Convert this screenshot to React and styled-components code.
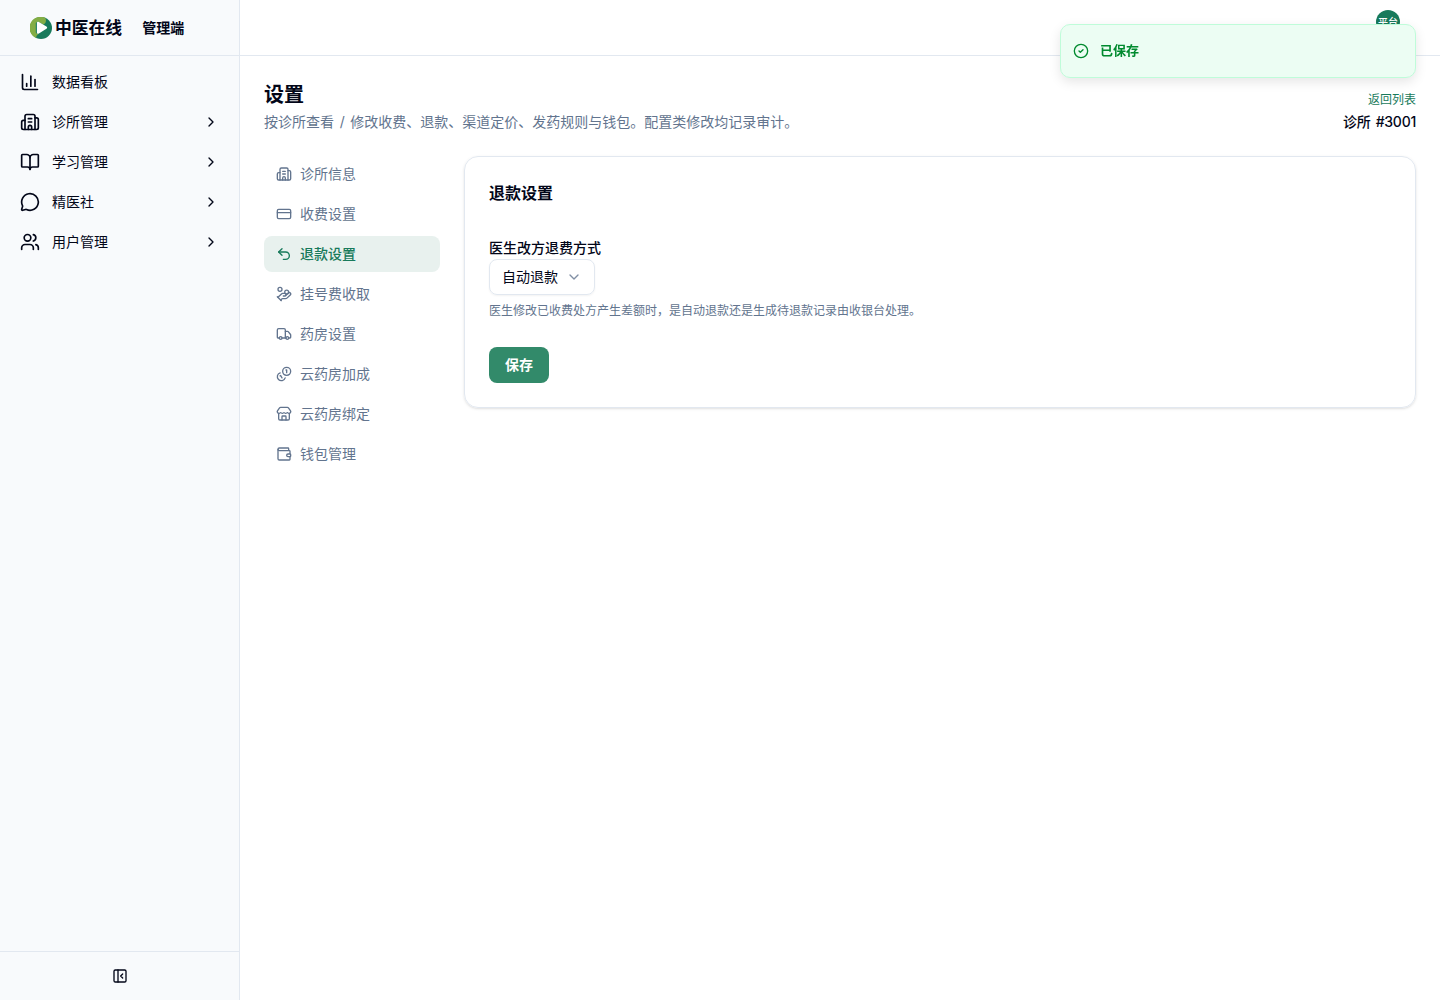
import React, { useState } from 'react'
import styled, { createGlobalStyle } from 'styled-components'
import {
    BookOpen,
    Building2,
    ChartColumn,
    ChevronDown,
    ChevronRight,
    CircleCheck,
    CreditCard,
    HandCoins,
    MessageCircle,
    PanelLeftClose,
    Store,
    Truck,
    Undo2,
    Users,
    Wallet
} from 'lucide-react'

const Coins = ({ size }) => (
    <svg
        width={size}
        height={size}
        viewBox="0 0 24 24"
        fill="none"
        stroke="currentColor"
        strokeWidth="2"
        strokeLinecap="round"
        strokeLinejoin="round"
    >
        <path d="M13.744 17.736a6 6 0 1 1-7.48-7.48" />
        <path d="M15 6h1v4" />
        <path d="m6.134 14.768.866-.5 2 3.464" />
        <circle cx="16" cy="8" r="6" />
    </svg>
)

const menu = [
    { label: '数据看板', icon: ChartColumn },
    { label: '诊所管理', icon: Building2, children: true },
    { label: '学习管理', icon: BookOpen, children: true },
    { label: '精医社', icon: MessageCircle, children: true },
    { label: '用户管理', icon: Users, children: true }
]

const tabs = [
    { label: '诊所信息', icon: Building2 },
    { label: '收费设置', icon: CreditCard },
    { label: '退款设置', icon: Undo2 },
    { label: '挂号费收取', icon: HandCoins },
    { label: '药房设置', icon: Truck },
    { label: '云药房加成', icon: Coins },
    { label: '云药房绑定', icon: Store },
    { label: '钱包管理', icon: Wallet }
]

const Logo = () => (
    <svg width="22" height="22" viewBox="0 0 22 22">
        <circle cx="11" cy="11" r="11" fill="#187a5b" />
        <path d="M6.4 21A11 11 0 1 1 15.2 .85C16.8 3.4 15.8 6.6 13.5 7.4L8 4.6L5.8 6V15.5C6.4 16.8 8.2 16.9 8.4 17.2C6.8 17.8 6 19.2 6.4 21Z" fill="#83ad45" />
        <path d="M6.9 6.2c0-1.2 1-1.7 2-1.2l7.5 4.6c1 .6 1 1.7 0 2.2l-7.5 4.7c-1 .6-2 .1-2-1.1z" fill="#fff" />
    </svg>
)

const App = () => {
    const [activeTab, setActiveTab] = useState('退款设置')

    return (
        <>
            <GlobalStyle />
            <Layout>
                <Sidebar>
                    <Brand>
                        <Logo />
                        <BrandName>中医在线</BrandName>
                        <BrandRole>管理端</BrandRole>
                    </Brand>
                    <Menu>
                        {menu.map(({ label, icon: Icon, children }) => (
                            <MenuItem key={label}>
                                <Icon size={20} />
                                <span>{label}</span>
                                {children && <ChevronRight size={16} />}
                            </MenuItem>
                        ))}
                    </Menu>
                    <SidebarFooter>
                        <PanelLeftClose size={16} />
                    </SidebarFooter>
                </Sidebar>

                <Main>
                    <TopBar>
                        <Avatar>平台</Avatar>
                    </TopBar>
                    <Content>
                        <PageHeader>
                            <div>
                                <PageTitle>设置</PageTitle>
                                <PageDescription>按诊所查看 / 修改收费、退款、渠道定价、发药规则与钱包。配置类修改均记录审计。</PageDescription>
                            </div>
                            <ClinicInfo>
                                <BackLink href="#">返回列表</BackLink>
                                <ClinicName>诊所 #3001</ClinicName>
                            </ClinicInfo>
                        </PageHeader>
                        <Columns>
                            <TabList>
                                {tabs.map(({ label, icon: Icon }) => (
                                    <Tab key={label} $active={label === activeTab} onClick={() => setActiveTab(label)}>
                                        <Icon size={16} />
                                        {label}
                                    </Tab>
                                ))}
                            </TabList>
                            <Card>
                                <CardTitle>退款设置</CardTitle>
                                <Field>
                                    <Label>医生改方退费方式</Label>
                                    <Select>
                                        自动退款
                                        <ChevronDown size={16} />
                                    </Select>
                                    <Hint>医生修改已收费处方产生差额时，是自动退款还是生成待退款记录由收银台处理。</Hint>
                                </Field>
                                <SaveButton>保存</SaveButton>
                            </Card>
                        </Columns>
                    </Content>
                </Main>
            </Layout>
            <Toast>
                <CircleCheck size={16} />
                <ToastText>已保存</ToastText>
            </Toast>
        </>
    )
}

const GlobalStyle = createGlobalStyle`
    * {
        box-sizing: border-box;
    }
    body {
        margin: 0;
        background: #fff;
        color: #020618;
        font-family: Inter, 'Noto Sans CJK SC', sans-serif;
        font-size: 14px;
        line-height: 20px;
    }
    button {
        font: inherit;
        color: inherit;
        background: none;
        border: none;
        padding: 0;
        cursor: pointer;
    }
    h1, h2, p {
        margin: 0;
    }
    svg {
        flex-shrink: 0;
    }
`

const Layout = styled.div`
    display: flex;
    height: 100vh;
`

const Sidebar = styled.aside`
    display: flex;
    flex-direction: column;
    width: 240px;
    flex-shrink: 0;
    background: #f8fafc;
    border-right: 1px solid #e2e8f0;
`

const Brand = styled.div`
    display: flex;
    align-items: center;
    height: 56px;
    padding-left: 30px;
    border-bottom: 1px solid #e2e8f0;
`

const BrandName = styled.span`
    margin-left: 3px;
    padding-top: 1px;
    font-size: 16.8px;
    font-weight: 600;
`

const BrandRole = styled.span`
    margin-left: 20px;
    font-weight: 600;
`

const Menu = styled.nav`
    display: flex;
    flex-direction: column;
    flex: 1;
    gap: 4px;
    padding: 8px;
`

const MenuItem = styled.button`
    display: flex;
    align-items: center;
    gap: 12px;
    height: 36px;
    padding: 0 12px;
    text-align: left;

    span {
        flex: 1;
    }
`

const SidebarFooter = styled.div`
    display: flex;
    align-items: center;
    justify-content: center;
    height: 49px;
    border-top: 1px solid #e2e8f0;
`

const Main = styled.main`
    display: flex;
    flex-direction: column;
    flex: 1;
    min-width: 0;
`

const TopBar = styled.header`
    display: flex;
    justify-content: flex-end;
    height: 56px;
    padding: 10px 40px 0;
    border-bottom: 1px solid #e2e8f0;
`

const Avatar = styled.div`
    display: flex;
    align-items: center;
    justify-content: center;
    width: 24px;
    height: 24px;
    border-radius: 50%;
    background: #187a5b;
    color: #fff;
    font-size: 10px;
    font-weight: 500;
    line-height: 16px;
`

const Content = styled.div`
    display: flex;
    flex-direction: column;
    gap: 24px;
    padding: 24px;
`

const PageHeader = styled.div`
    display: flex;
    justify-content: space-between;
    align-items: flex-end;
`

const PageTitle = styled.h1`
    padding-top: 1px;
    margin-bottom: 3px;
    font-size: 20px;
    font-weight: 600;
    line-height: 28px;
`

const PageDescription = styled.p`
    color: #62748e;
    word-spacing: 1.7px;
`

const ClinicInfo = styled.div`
    display: flex;
    flex-direction: column;
    align-items: flex-end;
    gap: 4px;
`

const BackLink = styled.a`
    color: #187a5b;
    font-size: 12px;
    line-height: 16px;
    text-decoration: none;
`

const ClinicName = styled.span`
    font-weight: 500;
    letter-spacing: -0.25px;
    word-spacing: 1.7px;
`

const Columns = styled.div`
    display: flex;
    align-items: flex-start;
    gap: 24px;
`

const TabList = styled.nav`
    display: flex;
    flex-direction: column;
    gap: 4px;
    width: 176px;
    flex-shrink: 0;
`

const Tab = styled.button`
    display: flex;
    align-items: center;
    gap: 8px;
    height: 36px;
    padding: 0 12px;
    border-radius: 8px;
    background: ${props => (props.$active ? '#e8f1ee' : 'transparent')};
    color: ${props => (props.$active ? '#187a5b' : '#62748e')};
    font-weight: ${props => (props.$active ? 500 : 400)};
`

const Card = styled.section`
    display: flex;
    flex-direction: column;
    align-items: flex-start;
    flex: 1;
    height: 252px;
    padding: 24px;
    border: 1px solid #e2e8f0;
    border-radius: 14px;
    box-shadow: 0 1px 3px rgba(0, 0, 0, 0.1), 0 1px 2px -1px rgba(0, 0, 0, 0.1);
`

const CardTitle = styled.h2`
    font-size: 16px;
    font-weight: 600;
    line-height: 24px;
`

const Field = styled.div`
    display: flex;
    flex-direction: column;
    align-items: flex-start;
    margin-top: 32px;
`

const Label = styled.label`
    line-height: 22px;
    font-weight: 500;
`

const Select = styled.button`
    display: flex;
    align-items: center;
    gap: 8px;
    height: 36px;
    padding: 0 12px;
    border: 1px solid #e2e8f0;
    border-radius: 8px;
    box-shadow: 0 1px 2px rgba(0, 0, 0, 0.05);

    svg {
        color: #62748e;
        opacity: 0.8;
    }
`

const Hint = styled.p`
    margin-top: 8px;
    color: #62748e;
    font-size: 12px;
    line-height: 16px;
`

const SaveButton = styled.button`
    height: 36px;
    margin-top: 28px;
    padding: 0 16px;
    border-radius: 8px;
    background: #328a6a;
    color: #fff;
    font-weight: 600;
`

const Toast = styled.div`
    position: fixed;
    top: 24px;
    right: 24px;
    display: flex;
    align-items: center;
    gap: 11px;
    width: 356px;
    height: 54px;
    padding: 0 12px;
    border: 1px solid #bffcd9;
    border-radius: 10px;
    background: #ecfdf3;
    box-shadow: 0 4px 12px rgba(0, 0, 0, 0.1);
    color: #008a2e;
    font-size: 13px;
    font-weight: 500;
`

const ToastText = styled.span`
    padding-bottom: 2px;
    font-weight: 600;
`

export default App
